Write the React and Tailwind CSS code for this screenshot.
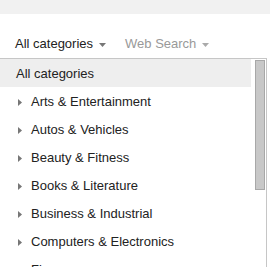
const categories = [
  'Arts & Entertainment',
  'Autos & Vehicles',
  'Beauty & Fitness',
  'Books & Literature',
  'Business & Industrial',
  'Computers & Electronics',
  'Finance',
]

function Caret({ className }) {
  return (
    <svg width="7" height="4" viewBox="0 0 7 4" className={className}>
      <path d="M0 0h7L3.5 4z" fill="currentColor" />
    </svg>
  )
}

function RowArrow() {
  return (
    <svg width="4" height="7" viewBox="0 0 4 7" className="text-[#777]">
      <path d="M0 0l4 3.5L0 7z" fill="currentColor" />
    </svg>
  )
}

export default function App() {
  return (
    <div
      className="h-[267px] w-[270px] overflow-hidden bg-white text-[13px] text-[#222]"
      style={{ fontFamily: 'Arial, "Liberation Sans", sans-serif' }}
    >
      <div className="h-[14px] bg-[#f1f1f1]" />
      <div className="flex h-[44px] items-end pb-[6px] pl-[15px] leading-[16px]">
        <div className="flex items-center">
          <span>All categories</span>
          <Caret className="ml-[6px] mt-[1px] text-[#777]" />
        </div>
        <div className="ml-[19px] flex items-center text-[#999]">
          <span>Web Search</span>
          <Caret className="ml-[6px] mt-[1px] text-[#aaa]" />
        </div>
      </div>
      <div className="-ml-px flex w-[268px] border border-[#c6c6c6] bg-white">
        <ul className="w-[251px]">
          <li className="flex h-[28px] items-center bg-[#eeeeee] pl-[16px] pt-[2px]">All categories</li>
          {categories.map((c) => (
            <li key={c} className="flex h-[28px] items-center pl-[18px] pt-[2px]">
              <RowArrow />
              <span className="ml-[9px]">{c}</span>
            </li>
          ))}
        </ul>
        <div className="flex flex-1 justify-end pr-px pt-[1px]">
          <div className="h-[130px] w-[10px] border border-[#a8a8a8] bg-[#c8c8c8]" />
        </div>
      </div>
    </div>
  )
}
